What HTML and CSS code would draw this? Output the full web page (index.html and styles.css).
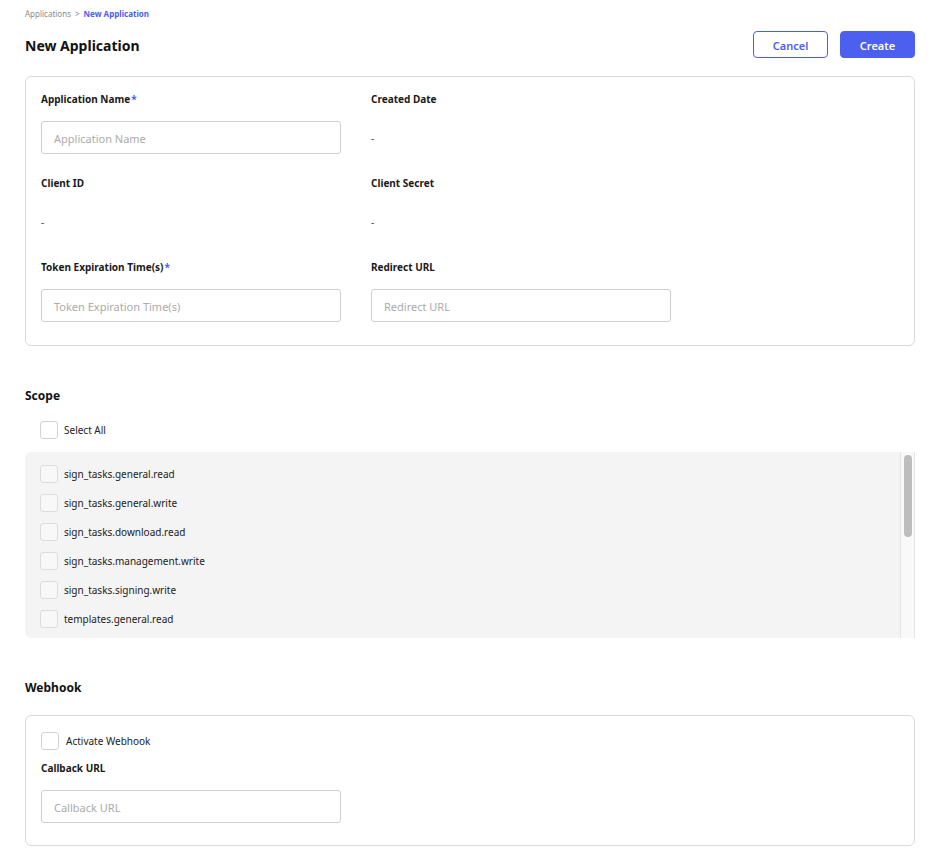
FILE: index.html
```html
<!DOCTYPE html>
<html>
<head>
<meta charset="utf-8">
<link rel="stylesheet" href="styles.css">
</head>
<body>
<div class="page">
  <div class="crumbs"><span class="crumb-muted">Applications</span><span class="crumb-sep">&gt;</span><span class="crumb-active">New Application</span></div>
  <div class="header">
    <h1 class="title">New Application</h1>
    <div class="actions">
      <button class="btn btn-outline">Cancel</button>
      <button class="btn btn-primary">Create</button>
    </div>
  </div>

  <div class="card form-card">
    <div class="field">
      <div class="label">Application Name<span class="req">*</span></div>
      <div class="input"><span class="ph">Application Name</span></div>
    </div>
    <div class="field">
      <div class="label">Created Date</div>
      <div class="value">-</div>
    </div>
    <div class="field">
      <div class="label">Client ID</div>
      <div class="value">-</div>
    </div>
    <div class="field">
      <div class="label">Client Secret</div>
      <div class="value">-</div>
    </div>
    <div class="field">
      <div class="label">Token Expiration Time(s)<span class="req">*</span></div>
      <div class="input"><span class="ph">Token Expiration Time(s)</span></div>
    </div>
    <div class="field">
      <div class="label">Redirect URL</div>
      <div class="input"><span class="ph">Redirect URL</span></div>
    </div>
  </div>

  <h2 class="section-title scope-title">Scope</h2>
  <div class="check-row select-all"><span class="box"></span><span class="check-label">Select All</span></div>
  <div class="scope-list">
    <div class="scope-items">
      <div class="check-row"><span class="box"></span><span class="check-label">sign_tasks.general.read</span></div>
      <div class="check-row"><span class="box"></span><span class="check-label">sign_tasks.general.write</span></div>
      <div class="check-row"><span class="box"></span><span class="check-label">sign_tasks.download.read</span></div>
      <div class="check-row"><span class="box"></span><span class="check-label">sign_tasks.management.write</span></div>
      <div class="check-row"><span class="box"></span><span class="check-label">sign_tasks.signing.write</span></div>
      <div class="check-row"><span class="box"></span><span class="check-label">templates.general.read</span></div>
    </div>
    <div class="scroll-track"><div class="scroll-thumb"></div></div>
  </div>

  <h2 class="section-title webhook-title">Webhook</h2>
  <div class="card webhook-card">
    <div class="check-row webhook-check"><span class="box"></span><span class="check-label">Activate Webhook</span></div>
    <div class="label callback-label">Callback URL</div>
    <div class="input callback-input"><span class="ph">Callback URL</span></div>
  </div>
</div>
</body>
</html>
```
FILE: styles.css
```css
* { box-sizing: border-box; }
html, body { margin: 0; padding: 0; background: #fff; }
body {
  font-family: "Noto Sans", "Open Sans", sans-serif;
  color: #1a1a1a;
}
.page {
  padding: 6px 23px 0 25px;
}
.crumbs {
  font-size: 8px;
  line-height: 16px;
  display: flex;
  gap: 4px;
}
.crumb-muted, .crumb-sep { color: #8a8a8a; }
.crumb-active { color: #4b5ef0; font-weight: 700; }

.header {
  display: flex;
  justify-content: space-between;
  align-items: center;
  margin-top: 9px;
  height: 27px;
}
.title {
  margin: 0;
  font-size: 14px;
  font-weight: 700;
  color: #111;
  padding-top: 2px;
}
.actions { display: flex; gap: 12px; }
.btn {
  width: 75px;
  height: 27px;
  border-radius: 4px;
  font-family: inherit;
  font-size: 11px;
  font-weight: 600;
  padding: 1px 0 0;
  cursor: pointer;
}
.btn-outline { background: #fff; border: 1px solid #4b5ef0; color: #4b5ef0; }
.btn-primary { background: #4c5fef; border: 1px solid #4c5fef; color: #fff; }

.card {
  border: 1px solid #d9d9d9;
  border-radius: 6px;
}
.form-card {
  margin-top: 18px;
  padding: 14px 15px 0 15px;
  display: grid;
  grid-template-columns: 300px 300px;
  grid-auto-rows: 63px;
  column-gap: 30px;
  row-gap: 21px;
  height: 270px;
}
.field { display: flex; flex-direction: column; }
.label {
  font-size: 10px;
  font-weight: 700;
  line-height: 16px;
  height: 16px;
  color: #1a1a1a;
}
.req { color: #4b5ef0; margin-left: 1px; }
.input {
  margin-top: 14px;
  height: 33px;
  border: 1px solid #cfcfcf;
  border-radius: 3px;
  display: flex;
  align-items: center;
  padding-left: 12px;
}
.ph { font-size: 11px; color: #ababab; padding-top: 1px; }
.value {
  margin-top: 14px;
  height: 33px;
  display: flex;
  align-items: center;
  font-size: 10px;
  color: #444;
}

.section-title {
  margin: 0;
  font-size: 12px;
  font-weight: 700;
  color: #111;
  line-height: 16px;
}
.scope-title { margin-top: 42px; }
.check-row {
  display: flex;
  align-items: center;
  gap: 6px;
  height: 29px;
}
.box {
  width: 18px;
  height: 18px;
  border: 1px solid #d2d2d2;
  border-radius: 3px;
  background: #fff;
  flex: none;
}
.check-label { font-size: 10px; color: #222; }
.select-all { margin-top: 17px; padding-left: 15px; height: 18px; }
.scope-list {
  margin-top: 13px;
  background: #f4f4f4;
  border-radius: 6px 0 0 6px;
  height: 186px;
  display: flex;
}
.scope-items {
  flex: 1;
  padding: 7px 0 0 15px;
}
.scope-list .box { background: #f8f8f8; border-color: #dcdcdc; }
.scroll-track {
  width: 15px;
  flex: none;
  background: #f9f9f9;
  border-left: 1px solid #e4e4e4;
  border-right: 1px solid #e4e4e4;
  padding: 3px 2px 0 3px;
}
.scroll-thumb {
  height: 82px;
  background: #bdbdbd;
  border-radius: 4px;
}

.webhook-title { margin-top: 42px; }
.webhook-card {
  margin-top: 19px;
  padding: 14px 15px 0 15px;
  height: 131px;
}
.webhook-check { height: 20px; margin-top: 1px; }
.webhook-check .check-label { margin-left: 1px; }
.callback-label { margin-top: 9px; }
.callback-input { width: 300px; margin-top: 14px; }
```
